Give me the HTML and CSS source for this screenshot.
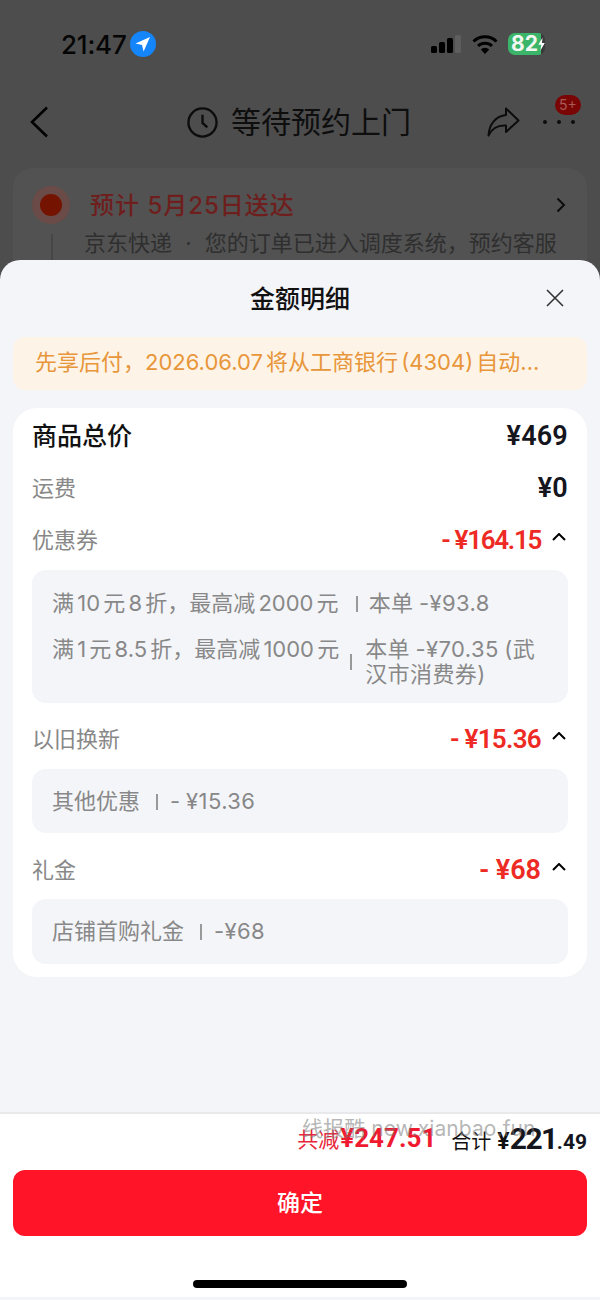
FILE: index.html
```html
<!DOCTYPE html>
<html lang="zh-CN">
<head>
<meta charset="utf-8">
<title>金额明细</title>
<link rel="stylesheet" href="styles.css">
</head>
<body>
<div class="page">
  <div class="backdrop">
    <div class="status">
      <div class="status-left">
        <span class="time">21:47</span>
        <svg class="loc" viewBox="0 0 26 26"><circle cx="13" cy="13" r="13" fill="#1485fb"/><path d="M20 6 L5.5 12.6 L12 14 L13.6 20.5 Z" fill="#fff"/></svg>
      </div>
      <div class="status-right">
        <svg class="signal" viewBox="0 0 30 18"><rect x="0" y="11" width="6" height="7" rx="1.5" fill="#000"/><rect x="8" y="7" width="6" height="11" rx="1.5" fill="#000"/><rect x="16" y="3" width="6" height="15" rx="1.5" fill="#000"/><rect x="24" y="0" width="6" height="18" rx="1.5" fill="#5e5e5e"/></svg>
        <svg class="wifi" viewBox="0 0 26 19"><path d="M1.5 6.5 A16.5 16.5 0 0 1 24.5 6.5" fill="none" stroke="#000" stroke-width="3"/><path d="M6 11 A10 10 0 0 1 20 11" fill="none" stroke="#000" stroke-width="3"/><path d="M13 19 L8.8 14.4 A6 6 0 0 1 17.2 14.4 Z" fill="#000"/></svg>
        <div class="battery"><span class="battery-num">82</span><svg class="bolt" viewBox="0 0 10 18"><path d="M6.5 0 L0.5 10 H4.5 L3.5 18 L9.5 7.5 H5.5 Z" fill="#fff"/></svg></div>
      </div>
    </div>
    <div class="nav">
      <svg class="back" viewBox="0 0 18 32"><path d="M17 1.5 L2 16 L17 30.5" fill="none" stroke="#000" stroke-width="2.6"/></svg>
      <div class="nav-title">
        <svg class="clock" viewBox="0 0 32 32"><circle cx="16" cy="16" r="14.5" fill="none" stroke="#0c0c0c" stroke-width="2.4"/><path d="M16 8 V16.5 L21 21" fill="none" stroke="#0c0c0c" stroke-width="2.4"/></svg>
        <span class="nav-text">等待预约上门</span>
      </div>
      <div class="nav-actions">
        <svg class="share" viewBox="0 0 33 30"><path d="M19 1.5 L31.5 13.5 L19 25 V18.5 C11 18 5 21 1.5 28.5 C2 17 9 9 19 8 Z" fill="none" stroke="#0c0c0c" stroke-width="2" stroke-linejoin="round"/></svg>
        <div class="more"><i></i><i></i><i></i><span class="badge">5+</span></div>
      </div>
    </div>
    <div class="order-card">
      <div class="order-head">
        <span class="pulse"></span>
        <span class="order-title">预计 5月25日送达</span>
        <svg class="order-arrow" viewBox="0 0 10 16"><path d="M1.5 1.5 L8 8 L1.5 14.5" fill="none" stroke="#0c0c0c" stroke-width="2"/></svg>
      </div>
      <div class="order-sub">京东快递 · 您的订单已进入调度系统，预约客服</div>
    </div>
  </div>

  <div class="sheet">
    <div class="sheet-head">
      <span class="sheet-title">金额明细</span>
      <svg class="close" viewBox="0 0 18 18"><path d="M1 1 L17 17 M17 1 L1 17" fill="none" stroke="#333" stroke-width="1.6"/></svg>
    </div>
    <div class="notice">先享后付，2026.06.07 将从工商银行 (4304) 自动...</div>

    <div class="detail-card">
      <div class="row">
        <span class="label-main">商品总价</span>
        <span class="value">¥469</span>
      </div>
      <div class="row">
        <span class="label">运费</span>
        <span class="value">¥0</span>
      </div>
      <div class="row">
        <span class="label">优惠券</span>
        <span class="discount discount-tight">- ¥164.15<svg class="caret" viewBox="0 0 14 8"><path d="M1 7 L7 1 L13 7" fill="none" stroke="#000" stroke-width="2"/></svg></span>
      </div>
      <div class="box box-multi">
        <div class="line line-first"><span class="line-left">满 10 元 8 折，最高减 2000 元</span><span class="sep"></span><span class="line-right">本单 -¥93.8</span></div>
        <div class="line line-second"><span class="line-left">满 1 元 8.5 折，最高减 1000 元</span><span class="sep"></span><span class="line-right">本单 -¥70.35 (武汉市消费券)</span></div>
      </div>
      <div class="row row-a">
        <span class="label">以旧换新</span>
        <span class="discount">- ¥15.36<svg class="caret" viewBox="0 0 14 8"><path d="M1 7 L7 1 L13 7" fill="none" stroke="#000" stroke-width="2"/></svg></span>
      </div>
      <div class="box">
        <div class="line"><span class="line-left">其他优惠</span><span class="sep"></span><span class="line-right">- ¥15.36</span></div>
      </div>
      <div class="row row-b">
        <span class="label">礼金</span>
        <span class="discount discount-wide">- ¥68<svg class="caret" viewBox="0 0 14 8"><path d="M1 7 L7 1 L13 7" fill="none" stroke="#000" stroke-width="2"/></svg></span>
      </div>
      <div class="box box-last">
        <div class="line"><span class="line-left">店铺首购礼金</span><span class="sep"></span><span class="line-right">-¥68</span></div>
      </div>
    </div>

    <div class="footer">
      <div class="watermark">线报酷 new.xianbao.fun</div>
      <div class="summary">
        <span class="saved">共减<b>¥247.51</b></span>
        <span class="total"><span class="total-label">合计</span><small class="yen">¥</small><b>221</b><strong>.49</strong></span>
      </div>
      <button class="confirm"><span class="confirm-text">确定</span></button>
      <div class="home-wrap"><span class="home"></span></div>
    </div>
  </div>
</div>
</body>
</html>
```

FILE: styles.css
```css
* { box-sizing: border-box; }
html, body { margin: 0; padding: 0; }
body {
  width: 600px;
  height: 1300px;
  overflow: hidden;
  font-family: Inter, "Noto Sans CJK SC", sans-serif;
}
.page {
  width: 600px;
  height: 1300px;
  display: flex;
  flex-direction: column;
  background: #4d4d4d;
}
.backdrop {
  height: 260px;
  flex: none;
  overflow: hidden;
  padding: 0 13px;
}
.status {
  height: 88px;
  padding: 0 42px 0 48px;
  display: flex;
  align-items: center;
  justify-content: space-between;
}
.status-left { display: flex; align-items: center; gap: 3px; }
.time { font-size: 26px; font-weight: 500; color: #050505; letter-spacing: -0.2px; }
.loc { width: 26px; height: 26px; display: block; }
.status-right { display: flex; align-items: center; }
.signal { width: 30px; height: 18px; display: block; margin-right: 11px; }
.wifi { width: 26px; height: 19px; display: block; margin-right: 10px; }
.battery {
  width: 37px;
  height: 22px;
  border-radius: 7px;
  background: linear-gradient(90deg, #3ab569 0 33px, #3a3a3a 33px);
  display: flex;
  align-items: center;
  padding-left: 3px;
}
.battery-num { font-size: 21px; font-weight: 700; color: #f2f7f2; line-height: 22px; }
.bolt { width: 9px; height: 16px; display: block; }
.nav {
  height: 68px;
  display: flex;
  align-items: center;
  padding-left: 17px;
}
.back { width: 18px; height: 32px; display: block; margin-right: 139px; }
.nav-title {
  display: flex;
  align-items: center;
  gap: 13px;
  font-size: 30px;
  color: #0e0e0e;
  width: 240px;
}
.nav-text { margin-bottom: 4px; }
.clock { width: 31px; height: 31px; display: block; flex: none; }
.nav-actions { display: flex; align-items: center; margin-left: 60px; }
.share { width: 33px; height: 30px; display: block; }
.more {
  position: relative;
  display: flex;
  gap: 10px;
  margin-left: 23px;
}
.more i { width: 4px; height: 4px; border-radius: 50%; background: #0c0c0c; display: block; }
.badge {
  position: absolute;
  left: 12px;
  top: -25px;
  width: 26px;
  height: 20px;
  border-radius: 10px;
  background: #7a0505;
  color: #a95a55;
  font-size: 14px;
  line-height: 20px;
  text-align: center;
}
.order-card {
  margin-top: 12px;
  background: #525252;
  border-radius: 20px 20px 0 0;
  padding: 17px 19px 0;
  height: 100px;
  position: relative;
}
.order-head { display: flex; align-items: center; height: 40px; }
.pulse {
  width: 38px;
  height: 38px;
  border-radius: 50%;
  background: #6a4b47;
  display: flex;
  flex: none;
  position: relative;
}
.pulse::after {
  content: "";
  position: absolute;
  left: 8px;
  top: 8px;
  width: 22px;
  height: 22px;
  border-radius: 50%;
  background: #741300;
}
.order-title {
  font-size: 24px;
  font-weight: 500;
  color: #6e1f1d;
  margin: 0 0 3px 20px;
  flex: 1;
  letter-spacing: 1px;
}
.order-arrow { width: 10px; height: 16px; display: block; margin-right: 2px; }
.order-sub {
  margin: 0 0 0 52px;
  font-size: 22px;
  color: #2f2f2f;
  line-height: 36px;
  white-space: nowrap;
  word-spacing: 7px;
}
.order-card::after {
  content: "";
  position: absolute;
  left: 38px;
  top: 66px;
  width: 2px;
  height: 30px;
  background: #464646;
}

.sheet {
  flex: 1;
  background: #f4f5f9;
  border-radius: 20px 20px 0 0;
  display: flex;
  flex-direction: column;
  min-height: 0;
}
.sheet-head {
  height: 77px;
  flex: none;
  position: relative;
  display: flex;
  align-items: center;
  justify-content: center;
}
.sheet-title { font-size: 25px; font-weight: 500; color: #111; margin-bottom: 4px; }
.close { position: absolute; right: 36px; top: 29px; width: 18px; height: 18px; display: block; }
.notice {
  margin: 0 13px;
  height: 53px;
  flex: none;
  border-radius: 12px;
  background: #fdf3e6;
  color: #e8963a;
  font-size: 22px;
  line-height: 51px;
  padding-left: 22px;
  white-space: nowrap;
  word-spacing: -3px;
}
.detail-card {
  margin: 18px 13px 0;
  flex: none;
  background: #fff;
  border-radius: 24px;
  padding: 2px 19px 13px;
}
.row {
  height: 52px;
  display: flex;
  align-items: center;
  justify-content: space-between;
}
.row-a { margin-top: 10px; }
.row-b { margin-top: 11px; }
.label-main { font-size: 25px; font-weight: 500; color: #111; margin-bottom: 4px; }
.label { font-size: 22px; color: #888; margin-bottom: 4px; }
.value { font-family: Roboto, sans-serif; font-size: 27px; font-weight: 600; color: #15151d; letter-spacing: 0.2px; }
.discount {
  font-family: Roboto, sans-serif;
  font-size: 26px;
  font-weight: 600;
  letter-spacing: -0.7px;
  color: #ee2a24;
  display: flex;
  align-items: center;
}
.discount-tight { letter-spacing: -1.3px; }
.discount-wide { letter-spacing: 0; font-size: 27px; }
.caret { width: 14px; height: 8px; display: block; margin: -7px 2px 0 11px; }
.box {
  margin-top: 4px;
  background: #f4f5f9;
  border-radius: 14px;
  padding: 20px 20px 19px;
}
.row-b + .box { margin-top: 3px; height: 65px; }
.box-multi { padding: 21px 20px 16px; }
.line {
  display: flex;
  align-items: flex-start;
  font-size: 22px;
  line-height: 25px;
  color: #888;
}
.line-second { margin-top: 21px; }
.line-left { flex: none; word-spacing: -3px; }
.line-right { letter-spacing: 0.4px; word-spacing: -1px; }
.sep { flex: none; align-self: center; width: 2px; height: 16px; background: #999; margin: 0 12px 0 16px; }
.line-first .sep { margin-left: 17px; margin-right: 11px; }
.line-second .sep { margin-left: 11px; margin-right: 13px; }

.footer {
  flex: 1;
  margin-top: 135px;
  background: #fff;
  border-top: 2px solid #e9e9ec;
  border-bottom: 3px solid #f4f5f9;
  position: relative;
  padding: 0 13px;
  display: flex;
  flex-direction: column;
}
.watermark {
  position: absolute;
  left: 302px;
  top: 1px;
  font-size: 21px;
  line-height: 28px;
  letter-spacing: 0.1px;
  color: rgba(120, 120, 120, 0.55);
  white-space: nowrap;
}
.summary {
  height: 48px;
  margin-bottom: 8px;
  display: flex;
  align-items: center;
  justify-content: flex-end;
  gap: 15px;
}
.saved { font-size: 21px; color: #e8263a; display: flex; align-items: center; }
.saved b { font-family: Roboto, sans-serif; font-size: 26px; font-weight: 700; color: #f01a30; margin-left: 1px; }
.total { color: #111; display: flex; align-items: baseline; font-family: Roboto, sans-serif; }
.total-label { font-family: "Noto Sans CJK SC", sans-serif; font-size: 20px; }
.total .yen { font-size: 23px; font-weight: 700; margin-left: 6px; }
.total b { font-size: 30px; font-weight: 700; color: #15151d; letter-spacing: -1.5px; }
.total strong { font-size: 21px; font-weight: 700; color: #15151d; }
.confirm {
  height: 66px;
  flex: none;
  border: 0;
  padding: 0;
  border-radius: 12px;
  background: #ff1428;
  color: #fff;
  font-family: inherit;
  font-size: 23px;
  font-weight: 500;
}
.confirm-text { display: block; margin-bottom: 4px; }
.home-wrap { flex: 1; display: flex; justify-content: center; padding-top: 44px; }
.home { width: 214px; height: 8px; border-radius: 4px; background: #000; display: block; }
```
